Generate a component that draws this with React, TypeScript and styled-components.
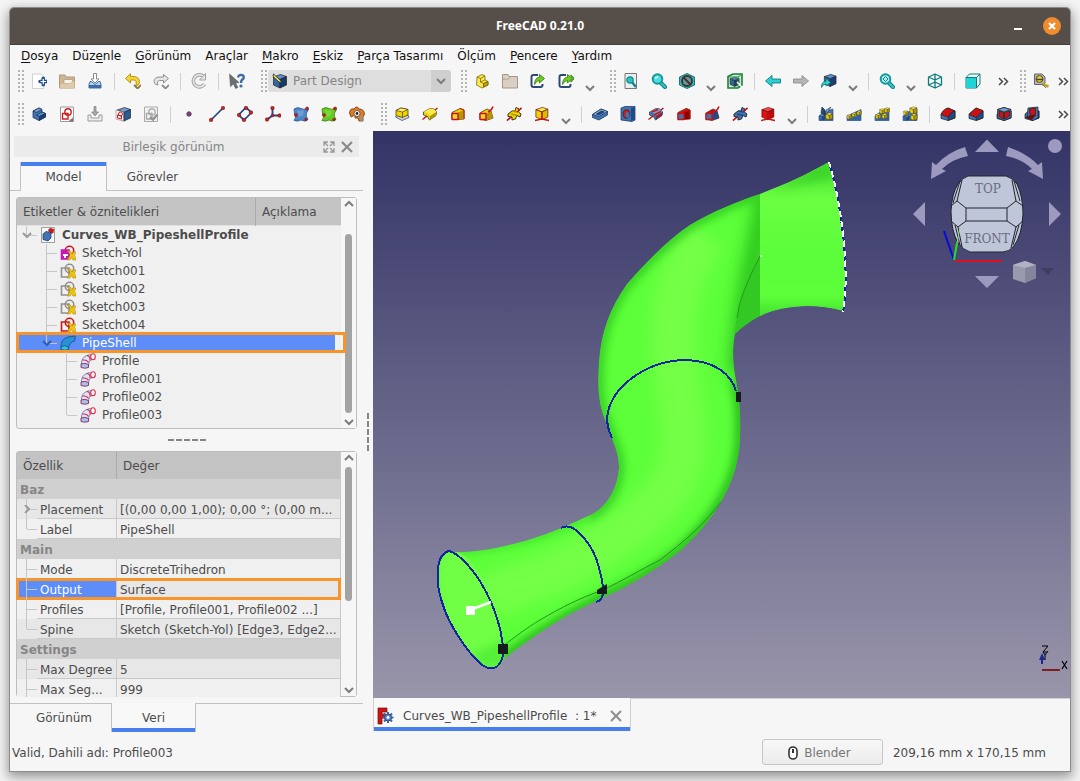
import React from "react";
import styled, { createGlobalStyle, css } from "styled-components";

const Global = createGlobalStyle`
  *, *::before, *::after { box-sizing: border-box; }
  body {
    margin: 0;
    background: #f4f4f4;
    color: #4c4c4c;
    font: 12px/18px "DejaVu Sans", sans-serif;
  }
  button, select { font: inherit; color: inherit; }
`;

/* ---------- window frame ---------- */

const Desktop = styled.div`
  display: flex;
  height: 100vh;
  min-height: 700px;
  padding: 8px 10px 10px;
`;

const Window = styled.div`
  flex: 1;
  min-width: 0;
  display: flex;
  flex-direction: column;
  background: #f6f6f6;
  border-radius: 4px 4px 0 0;
  box-shadow: 0 0 0 1px #8c8c8c, 0 4px 12px 2px rgba(0, 0, 0, 0.4);
  overflow: hidden;
`;

const TitleBar = styled.header`
  flex: none;
  height: 37px;
  display: grid;
  grid-template-columns: 1fr auto 1fr;
  align-items: center;
  background: #564f49;
  border-bottom: 1px solid #46403b;
`;

const Title = styled.h1`
  grid-column: 2;
  margin: 0;
  color: #fff;
  font: bold 12px/20px "Noto Sans", sans-serif;
`;

const WindowButtons = styled.div`
  justify-self: end;
  display: flex;
  align-items: center;
  gap: 16px;
  padding-right: 9px;
`;

const FrameButton = styled.button<{ $round?: boolean }>`
  width: 18px;
  height: 18px;
  padding: 0;
  border: 0;
  border-radius: 9px;
  background: ${(p) => (p.$round ? "#f18c2e" : "none")};
  svg { display: block; }
`;

const MenuBar = styled.nav`
  flex: none;
  display: flex;
  height: 20px;
  padding: 1px 4px 0;
  color: #111;
`;

const MenuItem = styled.button`
  padding: 0 7px;
  border: 0;
  background: none;
  line-height: 20px;
  white-space: nowrap;
  u { text-underline-offset: 2px; }
`;

/* ---------- tool bars ---------- */

const ToolRow = styled.div`
  flex: none;
  display: flex;
  align-items: center;
  gap: 2px;
  height: 33px;
  padding-bottom: 1px;
`;

const ToolGroup = styled.div<{ $grow?: boolean }>`
  display: flex;
  align-items: center;
  flex: ${(p) => (p.$grow ? "1 0 auto" : "none")};
`;

const Grip = styled.span`
  flex: none;
  width: 6px;
  height: 22px;
  margin: 0 1px 0 8px;
  background: radial-gradient(circle at 1px 1px, #b4b4b4 1px, transparent 1px) 0 0 / 4px 4px;
`;

const ToolButton = styled.button`
  flex: none;
  width: 28px;
  height: 28px;
  padding: 6px;
  border: 0;
  background: none;
  svg { display: block; width: 16px; height: 16px; }
`;

const MenuArrow = styled.button`
  flex: none;
  display: flex;
  align-items: flex-end;
  justify-content: center;
  width: 20px;
  height: 24px;
  padding: 0 0 1px;
  border: 0;
  background: none;
`;

const MoreButton = styled.button`
  flex: none;
  display: flex;
  align-items: center;
  justify-content: flex-end;
  width: 15px;
  height: 28px;
  margin-left: auto;
  padding: 0 1px 0 0;
  border: 0;
  background: none;
`;

const Divider = styled.span`
  flex: none;
  width: 10px;
  height: 17px;
  background: linear-gradient(#d0d0d0, #d0d0d0) center / 1px 100% no-repeat;
`;

const Combo = styled.div`
  display: flex;
  align-items: center;
  width: 183px;
  height: 22px;
  border-radius: 3px;
  background: linear-gradient(90deg, #dedede 163px, #cfcfcf 163px);
  > svg { flex: none; margin: 0 5px 0 4px; }
`;

const ComboSelect = styled.select`
  flex: 1;
  min-width: 0;
  height: 22px;
  padding: 0;
  border: 0;
  appearance: none;
  background: none;
  color: #858585;
  opacity: 1;
`;

/* ---------- main area ---------- */

const Main = styled.main`
  flex: 1;
  min-height: 0;
  display: grid;
  grid-template-columns: minmax(353px, 1fr) 10px minmax(0, 2fr);
`;

const Dock = styled.aside`
  display: flex;
  flex-direction: column;
  min-height: 0;
  padding-bottom: 1px;
`;

const DockTitle = styled.div`
  flex: none;
  display: flex;
  align-items: center;
  height: 21px;
  margin: 5px 4px;
  padding-right: 3px;
  background: #ebebeb;
  color: #858585;
  h2 {
    flex: 1;
    margin: 0;
    font: inherit;
    text-align: center;
    padding-left: 13px;
  }
`;

const DockButton = styled.button`
  width: 18px;
  height: 18px;
  padding: 2px;
  border: 0;
  background: none;
  svg { display: block; }
`;

const TabRow = styled.div<{ $bottom?: boolean }>`
  flex: none;
  display: flex;
  height: 29px;
  ${(p) => p.$bottom
    ? css`box-shadow: inset 0 1px #c2c2c2;`
    : css`padding-left: 10px; box-shadow: inset 0 -1px #c2c2c2;`}
`;

const DockTab = styled.button<{ $active?: boolean; $bottom?: boolean; $wide?: boolean }>`
  width: ${(p) => (p.$wide ? 101 : p.$bottom ? 85 : p.$active ? 87 : 91)}px;
  padding: 0;
  padding-left: ${(p) => (p.$wide ? 7 : 0)}px;
  border: 0 solid #c2c2c2;
  background: none;
  ${(p) => p.$active && css`
    border-width: 0 1px;
    background: ${p.$bottom
      ? "linear-gradient(0deg, #4780ee 4px, #f8f8f8 4px)"
      : "linear-gradient(#4780ee 4px, #f8f8f8 4px)"};
  `}
`;

const Box = styled.section<{ $grow?: boolean }>`
  display: flex;
  flex: ${(p) => (p.$grow ? "1 1 0" : "none")};
  min-height: 0;
  margin: 0 6px;
  border: 1px solid #bdbdbd;
  border-radius: 3px;
  background: #f0f0f0;
`;

const BoxContent = styled.div<{ $clip?: boolean }>`
  flex: 1;
  min-width: 0;
  ${(p) => p.$clip && css`overflow: clip; overflow-clip-margin: 1px;`}
`;

const ScrollBar = styled.div`
  flex: none;
  display: flex;
  flex-direction: column;
  align-items: center;
  width: 15px;
  padding: 2px 0;
  background: #f6f6f6;
`;

const Thumb = styled.div<{ $share: number; $gap: number }>`
  width: 7px;
  margin: ${(p) => p.$gap}px 0 auto;
  flex: 0 1 ${(p) => p.$share}%;
  border-radius: 4px;
  background: #a3a3a3;
`;

const TreeHeader = styled.div`
  display: grid;
  grid-template-columns: 1fr 86px;
  height: 28px;
  background: #c3c3c3;
  border-bottom: 1px solid #e2e2e2;
  line-height: 28px;
  span { padding-left: 6px; }
  span + span { border-left: 1px solid #aaa; }
`;

const TreeBody = styled.div`
  padding-bottom: 4px;
`;

const TreeRow = styled.div<{ $selected?: boolean; $root?: boolean }>`
  position: relative;
  display: flex;
  align-items: center;
  height: 18px;
  white-space: nowrap;
  font-weight: ${(p) => (p.$root ? "bold" : "normal")};
  > svg { flex: none; margin: 0 6px 0 3px; }
  ${(p) => p.$selected && css`
    margin-right: 6px;
    background: #5c8df9;
    color: #fff;
    &::after {
      content: "";
      position: absolute;
      inset: -2px -11px -1px -1px;
      border: 3px solid #f8952a;
    }
  `}
`;

const Guide = styled.span<{ $kind: "none" | "tee" | "end" | "open" | "closed" }>`
  flex: none;
  position: relative;
  display: flex;
  align-items: center;
  justify-content: center;
  width: 20px;
  align-self: stretch;
  ${(p) => p.$kind !== "none" && css`
    background:
      linear-gradient(#c6c6c6, #c6c6c6) 9px 0 / 1px ${p.$kind === "tee" || p.$kind === "closed" ? "100%" : "50%"} no-repeat,
      linear-gradient(#c6c6c6, #c6c6c6) 10px 50% / 10px 1px no-repeat;
  `}
`;

const HSplit = styled.div<{ $thin?: boolean }>`
  flex: none;
  display: grid;
  place-items: center;
  height: ${(p) => (p.$thin ? 6 : 22)}px;
`;

const VSplit = styled.div`
  display: grid;
  place-items: center;
`;

const Dashes = styled.span<{ $vertical?: boolean }>`
  ${(p) => p.$vertical
    ? css`width: 2px; height: 38px; background: repeating-linear-gradient(#858585 0 6px, transparent 6px 8px);`
    : css`width: 38px; height: 2px; background: repeating-linear-gradient(90deg, #858585 0 6px, transparent 6px 8px);`}
`;

const PropTable = styled.table`
  width: 100%;
  table-layout: fixed;
  border-collapse: separate;
  border-spacing: 0;
  border-right: 1px solid #c6c6c6;
  th, td { padding: 0; text-align: left; white-space: nowrap; overflow: hidden; }
  col:first-child { width: 99px; }
  thead th {
    height: 27px;
    padding: 1px 0 0 6px;
    background: #c3c3c3;
    font-weight: normal;
  }
  thead th + th { border-left: 1px solid #aaa; }
`;

const GroupRow = styled.tr`
  && th {
    height: 20px;
    padding: 2px 0 0 3px;
    background: #d0d0d0;
    color: #868686;
  }
`;

const PropRow = styled.tr<{ $alt?: boolean; $selected?: boolean }>`
  background: ${(p) => (p.$alt ? "#e7e7e7" : "#f0f0f0")};
  && th, && td { height: 20px; font-weight: normal; }
  && th { background: linear-gradient(#c9c9c9, #c9c9c9) 20px 100% / 100% 1px no-repeat; }
  && td {
    padding: 2px 0 0 3px;
    border-left: 1px solid #c9c9c9;
    background: linear-gradient(#c9c9c9, #c9c9c9) 0 100% / 100% 1px no-repeat;
  }
  ${(p) => p.$selected && css`
    outline: 3px solid #f8952a;
    outline-offset: -2px;
    && th { background: #5c8df9; color: #fff; }
  `}
`;

const PropName = styled.div`
  display: flex;
  gap: 3px;
  height: 20px;
  > span:last-child { padding-top: 2px; }
`;

/* ---------- 3D view ---------- */

const Workspace = styled.section`
  display: flex;
  flex-direction: column;
  min-height: 0;
`;

const View = styled.div`
  flex: 1;
  min-height: 0;
  position: relative;
  overflow: hidden;
  background: linear-gradient(#333366, #9996ab);
`;

const Scene = styled.svg`
  display: block;
  width: 100%;
  height: 100%;
`;

const NavOverlay = styled.svg`
  position: absolute;
  top: 0;
  right: 0;
`;

const AxisOverlay = styled.svg`
  position: absolute;
  right: 0;
  bottom: 20px;
`;

const DocTabs = styled.div`
  flex: none;
  display: flex;
  height: 35px;
  padding-bottom: 2px;
  box-shadow: inset 0 1px #d2d2d2;
`;

const DocTab = styled.div`
  display: flex;
  align-items: center;
  width: 258px;
  padding: 2px 5px 0 3px;
  border: 1px solid #cfcfcf;
  border-width: 0 1px 0;
  background: linear-gradient(0deg, #4780ee 4px, #f8f8f8 4px);
  white-space: pre;
  > svg { margin-right: 9px; }
  > button { margin-left: auto; }
`;

const StatusBar = styled.footer`
  flex: none;
  display: flex;
  align-items: center;
  height: 38px;
  padding: 0 24px 0 2px;
  > span { padding-top: 1px; }
`;

const NavStyle = styled.button`
  display: flex;
  align-items: center;
  justify-content: center;
  gap: 6px;
  width: 121px;
  height: 26px;
  margin: 0 10px 0 auto;
  padding: 1px 6px 0 0;
  border: 1px solid #c6c6c6;
  border-radius: 3px;
  background: linear-gradient(#f8f8f8, #ececec);
  color: #777;
`;

/* ---------- icons ---------- */

const BL = ["#729fcf", "#3f74b4", "#204a87"];
const YE = ["#fce94f", "#edd400", "#b89600"];
const RE = ["#ef4040", "#d01010", "#900000"];

type Shade = string[];

const Cube = ({ c, s = "#222", x = 0, y = 0, k = 1 }: { c: Shade; s?: string; x?: number; y?: number; k?: number }) => (
  <g transform={`translate(${x} ${y}) scale(${k})`} stroke={s} strokeWidth={0.7} strokeLinejoin="round">
    <path d="M1.500 4 8.500 1.500 14.500 3.500 8 6.500Z" fill={c[0]} />
    <path d="M1.500 4 8 6.500V15L1.500 12Z" fill={c[1]} />
    <path d="M8 6.500 14.500 3.500V12L8 15Z" fill={c[2]} />
  </g>
);

const Dot = ({ x, y, r = 1.8 }: { x: number; y: number; r?: number }) => (
  <circle cx={x} cy={y} r={r} fill="#cc2222" stroke="#6a1010" strokeWidth={0.5} />
);

const Lens = ({ mark }: { mark?: boolean }) => (
  <g fill="none">
    <path d="M9.500 9.500 14 14" stroke="#0f8284" strokeWidth={4} strokeLinecap="round" />
    <path d="M9.500 9.500 14 14" stroke="#2fc6c7" strokeWidth={2} strokeLinecap="round" />
    <circle cx={6.500} cy={6} r={4.800} fill={mark ? "#a9eaea" : "#4fdcdc"} stroke="#14989a" strokeWidth={2} />
    {mark ? <path d="M6.500 3.500 9 6 6.500 8.500 4 6Z" stroke="#0f8a8c" /> : <path d="M4 5.500 7 3.500" stroke="#e8ffff" strokeWidth={1.500} />}
  </g>
);

const Loft = ({ c, face, axis }: { c: Shade; face: string; axis?: boolean }) => (
  <g strokeLinejoin="round">
    <path d={axis ? "M2 7 9 3 13 5 15 12 8 14.500 2 13Z" : "M2 6.500 10 2.500 14 4V13L8 13.500 2 13Z"} fill={c[1]} stroke="#5a2a10" strokeWidth={0.8} />
    <path d={axis ? "M8 8 13 5 15 12 8 14Z" : "M8 6.500 14 4V13L8 13Z"} fill={c[2]} />
    <path d="M2 7.500H8V13.500H2Z" fill={face} stroke="#c11" strokeWidth={1.400} />
    {axis ? <path d="M10 6Q14 4 15 0.500" fill="none" stroke="#c11" strokeWidth={1.400} /> : <path d="M10 2.500 14 4V13" fill="none" stroke="#c11" />}
  </g>
);

const Revolve = ({ c }: { c: Shade }) => (
  <g>
    <path d="M0.500 13.500 15.500 2" stroke="#c11" strokeWidth={1.500} />
    <path d="M1.500 6 8 2.500Q12.500 2 14.500 6L14 9.500 7.500 14Q6.500 9.500 1.500 9Z" fill={c[1]} stroke="#333" strokeWidth={0.8} />
    <path d="M1.500 6 8 2.500Q12.500 2 14.500 6L8 10Q6 6 1.500 6Z" fill={c[0]} />
    <path d="M8 10 14.500 6 14 9.500 7.500 14Z" fill={c[2]} />
  </g>
);

const Helix = ({ c }: { c: Shade }) => (
  <g strokeLinejoin="round">
    <path d="M1 14.500 15.500 2" stroke="#c11" strokeWidth={1.400} />
    <path d="M2 8 6 5 9 5 10 1.500 13 3 12.500 6 15 8 14 11 11 9.500 9.500 13 6 14 6 11 2 10.500Z" fill={c[1]} stroke="#222" strokeWidth={0.9} />
    <path d="M6 5 12.500 6M5 8 11 9.500" stroke={c[2]} strokeWidth={1.400} />
    <path d="M1 14.500 5 11M11 6 15.500 2" stroke="#c11" strokeWidth={1.400} />
  </g>
);

const Primitive = ({ c }: { c: Shade }) => (
  <g>
    <Cube c={c} s="#600" k={0.920} x={0.5} y={0} />
    <path d="M8 6V13L1 14.500M8 13 15 14.500" fill="none" stroke="#c11" strokeWidth={1.300} />
  </g>
);

const Pattern = ({ n }: { n: number }) => (
  <g>
    <path d={n === 1 ? "M1 10 15 3.500V14.500H1Z" : "M1 10 6 6 15 3V14.500H1Z"} fill={BL[1]} stroke="#204a87" strokeWidth={0.6} />
    <path d="M1 14.500 15 8V14.500Z" fill={BL[2]} opacity={0.4} />
    {n === 0 && <><path d="M4 1 7 4V9L3 7Z" fill={BL[2]} stroke="#222" strokeWidth={0.6} /><path d="M13 1 8 4 8 9Z" fill={BL[0]} stroke="#222" strokeWidth={0.5} /><Cube c={BL} x={1} y={8} k={0.4} /><Cube c={YE} x={7} y={6} k={0.530} /></>}
    {n === 1 && <><Cube c={YE} x={0.5} y={8} k={0.350} /><Cube c={YE} x={5.500} y={6} k={0.350} /><Cube c={YE} x={10.500} y={4} k={0.350} /></>}
    {n === 2 && <><Cube c={YE} x={1} y={7} k={0.4} /><Cube c={YE} x={5} y={2} k={0.4} /><Cube c={YE} x={10} y={1} k={0.4} /><Cube c={YE} x={7.500} y={7} k={0.4} /></>}
    {n === 3 && <><Cube c={YE} x={7} y={0} k={0.550} /><Cube c={YE} x={8} y={7} k={0.5} /><Cube c={YE} x={1} y={4} k={0.350} /><Cube c={BL} x={2} y={9} k={0.350} /></>}
  </g>
);

const Dress = ({ n }: { n: number }) => (
  <g strokeLinejoin="round" strokeWidth={0.7} stroke="#222">
    <path d="M1 8 8 2 15 5V12L8 14.500 1 12.500Z" fill={BL[1]} />
    <path d="M9 8 15 5V12L8 14.500Z" fill={BL[2]} />
    {n === 0 && <path d="M1 8.500Q3 3 8 2L15 5Q10 6 8.500 11.500Z" fill={RE[1]} />}
    {n === 1 && <path d="M1 8.500 8 2 15 4.500 8 11.500Z" fill={RE[1]} />}
    {n === 2 && <><path d="M1.500 3.500 8 1.500 15 3.500V11.500L8 14.500 1.500 12Z" fill={BL[1]} /><path d="M1.500 3.500 8 1.500 15 3.500 8 6Z" fill={BL[0]} /><path d="M3 5 7.500 6.500V13L3 10.500Z" fill={RE[1]} /><path d="M8.500 6.500 13.500 5V10L8.500 13Z" fill={RE[1]} /></>}
    {n === 3 && <><path d="M4 2 14 1V12L9 14.500 3 12Z" fill={BL[1]} /><path d="M5.500 3 11.500 2V9L6 10Z" fill={RE[1]} /><path d="M1.500 11.500 6 10 11.500 9 8 13.500Z" fill={RE[2]} /></>}
  </g>
);

const LinkArrow = ({ two }: { two?: boolean }) => (
  <g>
    <path d="M8 2H3.500Q1.500 2 1.500 4V12Q1.500 14 3.500 14H10.500Q12.500 14 12.500 12V11" fill="#fff" stroke="#2a4a72" strokeWidth={2} />
    <path d="M4.500 11.500Q4.500 5 9.500 4V1.500L14.500 5.500 9.500 10V7.500Q6.500 7.500 4.500 11.500Z" fill="#6ccb26" stroke="#2f7306" strokeWidth={0.8} />
    {two && <path d="M12.500 2 16 5.500 12.500 9" fill="none" stroke="#3f9210" strokeWidth={1.300} />}
  </g>
);

const ICONS: Record<string, React.ReactNode> = {
  new: <><path d="M1.500 1H10L13 4V15.500H1.500Z" fill="#fff" stroke="#d2d2d2" /><path d="M9 8.500H15.500M12.250 5.250V11.750" stroke="#24508c" strokeWidth={3.600} strokeLinecap="round" /><path d="M9.500 8.500H15M12.250 5.750V11.250" stroke="#fff" strokeWidth={1.200} /></>,
  open: <><path d="M0.500 2H6L7 4H15.500V15H0.500Z" fill="#cdb691" stroke="#b09a78" /><path d="M5 6.500H13.500V10.500H5Z" fill="#f8f4ec" stroke="#a08b68" strokeWidth={0.6} /><path d="M1 14.500V11.500Q2 10 6 10.500H10L12.500 8.500H15.500V15H1Z" fill="#dccaa9" /></>,
  save: <><path d="M6.500 0.500H9.500V6H12L8 10 4 6H6.500Z" fill="#fff" stroke="#8a8a8a" /><path d="M3 8.500 2 11.500V15H14V11.500L13 8.500H11.500L8 11.500 4.500 8.500Z" fill="#b9cfe8" stroke="#3c6aa5" /><path d="M2 12H14V15H2Z" fill="#3c6aa5" /></>,
  undo: <><path d="M0.500 5.500 5.500 0.800V3.500H9Q14.500 4 14.500 9.500 13.500 13 11 12.500 12 7 9 7H5.500V10Z" fill="#f5d53a" stroke="#b48a00" strokeWidth={0.9} /><path d="M9 12 12.500 15.500 16 12" fill="none" stroke="#8c7a40" strokeWidth={1.800} /></>,
  redo: <><path d="M15.500 5.500 10.500 1.500V4H6Q1 4.500 1 8.500 1.500 12 5 12 3.500 8 6.500 7.500H10.500V10Z" fill="#e4e4e4" stroke="#909090" /><path d="M9 12 12.500 15.500 16 12" fill="none" stroke="#8c8c8c" strokeWidth={1.800} /></>,
  refresh: <g fill="none"><path d="M12.500 3.500A6 6 0 1 0 13.500 11" stroke="#a2a2a2" strokeWidth={3.600} /><path d="M12.500 3.500A6 6 0 1 0 13.500 11" stroke="#e8e8e8" strokeWidth={1.600} /><path d="M14.500 0.500V7H8.500Z" fill="#e8e8e8" stroke="#a2a2a2" /></g>,
  help: <><path d="M0.500 1 10 9.500 6.500 10 9 14.500 6.500 15.500 4.500 11 1.500 13.500Z" fill="#6b7072" stroke="#4a4e50" strokeWidth={0.5} /><path d="M9 4.500Q9.500 1.500 12.500 2 15.500 2.500 14.500 5.500 12 7 12 10" fill="none" stroke="#3f6ea6" strokeWidth={2.400} /><circle cx={12} cy={13} r={1.600} fill="#3f6ea6" /></>,
  partYellow: <g stroke="#6b5a00" strokeWidth={0.7} strokeLinejoin="round"><path d="M3 4 8 1.500 11 3V7L14 8.500V12L8 15 2.500 12Z" fill="#fce94f" /><path d="M3 4 6.500 5.500V9L9.500 10.500 14 8.500M6.500 5.500 11 3M6.500 9 11 7M9.500 10.500V14" fill="none" /><path d="M9.500 10.500 14 8.500V12L9.500 14Z" fill="#c4a000" /></g>,
  folder: <path d="M0.500 1.500H6L7 3.500H15.500V15H0.500ZM0.500 6H6.500L7.500 4" fill="#dacfc3" stroke="#a39686" />,
  link1: <LinkArrow />,
  link2: <LinkArrow two />,
  fitPage: <><path d="M2 0.500H13.500V15.500H2Z" fill="#e9efef" stroke="#777" /><path d="M8 8 13 14" stroke="#0f8a8c" strokeWidth={2.500} /><circle cx={7} cy={7} r={3.200} fill="#2cc2c3" stroke="#0f8a8c" strokeWidth={1.200} /></>,
  zoom: <Lens />,
  noDraw: <><path d="M8 0.500 15.500 4V12L8 15.500 0.500 12V4Z" fill="#35b4b6" stroke="#17797b" /><circle cx={8} cy={8} r={5} fill="#5a9ea0" stroke="#4a2a2a" strokeWidth={1.800} /><path d="M4.500 4.500 11.500 11.500" stroke="#4a2a2a" strokeWidth={1.800} /></>,
  bbox: <><path d="M1 3.500 6 1H15V12L11 15H1Z" fill="#cfe8cf" stroke="#17803a" strokeWidth={1.600} /><Cube c={["#4d86b8", "#2e648f", "#1d3f66"]} x={2} y={3} k={0.7} /><path d="M1 4H11V15M11 4 15 1" fill="none" stroke="#2a9a4a" /><path d="M10 9 15 14" stroke="#fff" strokeWidth={1.500} /></>,
  back: <path d="M0.500 8 7 2.500V6H15.500V10H7V13.500Z" fill="#2ccfd0" stroke="#0f7f81" strokeWidth={0.9} />,
  forward: <path d="M15.500 8 9 2.500V6H0.500V10H9V13.500Z" fill="#b5b5b5" stroke="#8f8f8f" strokeWidth={0.9} />,
  linkBack: <><Cube c={["#5a8fd0", "#2f66a8", "#1b3f74"]} x={2} y={0} k={0.9} /><path d="M0.500 14.500Q0 9 5 8V5.500L10 9.500 5 13V11Q2 11 0.500 14.500Z" fill="#2ccfd0" stroke="#0b5f61" strokeWidth={0.7} /></>,
  zoomSel: <Lens mark />,
  iso: <path d="M8 1 14.500 4V12L8 15 1.500 12V4ZM1.500 4 8 7 14.500 4M8 7V15M8 1V7M1.500 12 8 9 14.500 12" fill="#effafa" stroke="#12797b" strokeWidth={1.300} strokeLinejoin="round" />,
  front: <><path d="M1 4.500 4.500 1H15V11L11.500 15H1Z" fill="#eafafa" stroke="#117a7c" strokeLinejoin="round" /><path d="M1 4.500H11.500V15H1Z" fill="#22d3d5" /><path d="M1 4.500H11.500V15M11.500 4.500 15 1" fill="none" stroke="#117a7c" /></>,
  measure: <><path d="M1.500 1H9L12 4V10L9 11.500H1.500Z" fill="#b5b5b5" stroke="#666" /><circle cx={6.500} cy={6} r={3.400} fill="#e8d22a" stroke="#4d4d26" /><path d="M3 6.500H10" stroke="#444" strokeWidth={1.500} /><path d="M9 11 15.500 13.500" stroke="#b7a51e" strokeWidth={2.500} /><path d="M9 11 13 15" stroke="#777" /></>,

  body: <g stroke="#152d52" strokeWidth={0.7} strokeLinejoin="round"><path d="M2 5 8 2 11 3.500V6L14.500 7.500V11L8 14.500 2 11.500Z" fill="#3f74b4" /><path d="M2 5 8 2 11 3.500 5.500 6.500Z" fill="#729fcf" /><path d="M5.500 9 11 6 14.500 7.500 8.500 10.500Z" fill="#5b8ecb" /><path d="M8.500 10.500 14.500 7.500V11L8 14.500Z" fill="#1c3f74" /></g>,
  sketch: <><path d="M1.500 1H14.500V15.500H1.500Z" fill="#fff" stroke="#9a9a9a" /><path d="M3.500 7.500H9V13H3.500Z" fill="none" stroke="#d21c1c" strokeWidth={1.400} /><circle cx={9} cy={6} r={3.200} fill="none" stroke="#d21c1c" strokeWidth={1.400} /><path d="M11 13.500Q14 13 14 10V15.500H10Z" fill="#777" /></>,
  attach: <><path d="M7 0.500H9V6H11.500L8 10 4.500 6H7Z" fill="#a8a8a8" stroke="#808080" strokeWidth={0.7} /><path d="M1 9H4V12H12V9H15V15H1Z" fill="#eee" stroke="#999" /></>,
  validate: <><Cube c={["#6f9fd4", "#2f66a8", "#2a5b98"]} x={1} /><path d="M1 4 8.500 6V15L1 13Z" fill="#eef2f7" stroke="#888" strokeWidth={0.6} /><circle cx={5.500} cy={8} r={2} fill="none" stroke="#d21c1c" /><path d="M2.500 9 6.500 10V13L2.500 12Z" fill="none" stroke="#d21c1c" /></>,
  mapSketch: <><path d="M1.500 1H14.500V15.500H1.500Z" fill="#f2f2f2" stroke="#ababab" /><path d="M3.500 7.500H9V13H3.500Z" fill="none" stroke="#a8a8a8" strokeWidth={1.300} /><circle cx={9} cy={6} r={3.200} fill="none" stroke="#a8a8a8" strokeWidth={1.300} /><path d="M7 11 10 13.500 14.500 8.500" fill="none" stroke="#939393" strokeWidth={2.400} /></>,
  point: <circle cx={8} cy={8} r={2.200} fill="#b03050" stroke="#2f4f86" />,
  line: <><path d="M2 14 14 2" stroke="#234a86" strokeWidth={1.700} /><Dot x={2} y={14} /><Dot x={14} y={2} /></>,
  plane: <><path d="M9 1.500 14.500 6.500 7 14 1.500 9Z" fill="none" stroke="#234a86" strokeWidth={1.700} /><Dot x={9} y={2} /><Dot x={14} y={6.500} /><Dot x={7} y={14} /><Dot x={2} y={9} /></>,
  axes: <><path d="M7.500 9.500V1.500M7.500 9.500 15 9.500M7.500 9.500 1.500 14" stroke="#234a86" strokeWidth={1.900} /><Dot x={7.500} y={2} /><Dot x={14.500} y={9.500} /><Dot x={2} y={13.500} /><Dot x={7.500} y={9.500} r={1.400} /></>,
  shapeBinder: <><path d="M1 3Q5 0.500 8 2.500T15 1.500Q16.500 3 13.500 7 12.500 10 15 13.500 12 16.500 8 14 5 16 1 14.500 4 11 1.500 8Z" fill="#4f86c6" stroke="#24508c" strokeWidth={0.7} /><path d="M4 4 8 5 11 4 10 9 6 11Z" fill="#6f9dd4" /><Dot x={14} y={2.500} r={1.500} /><Dot x={3} y={9} r={1.500} /><Dot x={13} y={13.500} r={1.300} /></>,
  subBinder: <><path d="M1 3Q5 0.500 8 2.500T15 1.500Q16.500 3 13.500 7 12.500 10 15 13.500 12 16.500 8 14 5 16 1 14.500 4 11 1.500 8Z" fill="#68c924" stroke="#2f7306" strokeWidth={0.7} /><path d="M4 4 8 5 11 4 10 9 6 11Z" fill="#7fd63a" /><Dot x={14} y={2.500} r={1.500} /><Dot x={3} y={9} r={1.500} /><Dot x={13} y={13.500} r={1.300} /></>,
  clone: <><path d="M0.500 7Q1 2 5 3L7 1Q9 0.500 10 3 15 3 15.500 8L14 11V15H10L9 12H6V9L2 11Z" fill="#e07b22" stroke="#6b3408" strokeWidth={0.8} /><circle cx={8} cy={7.500} r={3} fill="#fff" stroke="#333" strokeWidth={0.7} /><circle cx={8} cy={7.500} r={1.400} fill="#222" /><path d="M12.500 10V15" stroke="#999" strokeWidth={2} /></>,
  pad: <><path d="M1.500 11 8 14.500 15 11.500 14 9H3Z" fill="#ccd3d8" stroke="#61717d" /><path d="M2 4.500 7 2 14 3.500V9L8.500 11.500 2 9.500Z" fill="#edd400" stroke="#4e4200" strokeWidth={0.8} /><path d="M2 4.500 7 2 14 3.500 8.500 6Z" fill="#fdf07a" stroke="#4e4200" strokeWidth={0.7} /><path d="M8.500 6V11.500" stroke="#4e4200" strokeWidth={0.7} /></>,
  revolution: <Revolve c={YE} />,
  addLoft: <Loft c={YE} face="#f5d53a" />,
  addPipe: <Loft c={YE} face="#f5d53a" axis />,
  addHelix: <Helix c={YE} />,
  addPrim: <Primitive c={["#fce94f", "#edd400", "#d9bd00"]} />,
  pocket: <g stroke="#152d52" strokeWidth={0.7} strokeLinejoin="round"><path d="M0.500 8.500 9 3 15.500 5.500V9L7 14 0.500 11.500Z" fill="#3f74b4" /><path d="M0.500 8.500 9 3 15.500 5.500 7 10.500Z" fill="#82aede" /><path d="M4.500 8 9.500 5 12 6 7 9Z" fill="#204a87" /></g>,
  hole: <g><path d="M1 2 5 0.500H15V14L12 15.500 1 14Z" fill="#3f74b4" stroke="#152d52" strokeWidth={0.7} /><path d="M11 2V15L15 13V1Z" fill="#204a87" /><ellipse cx={6.500} cy={8} rx={3.300} ry={4.300} fill="#d21c1c" stroke="#222" strokeWidth={0.7} /><ellipse cx={7.500} cy={9} rx={2} ry={3} fill="#3f74b4" /></g>,
  groove: <><Revolve c={BL} /><path d="M3.500 6 10 3.500M6 9 13 5.500M8 11.500 14 8" stroke="#c11" strokeWidth={1.600} /></>,
  subLoft: <Loft c={["#e33", "#d01010", "#900000"]} face="#3f74b4" />,
  subPipe: <Loft c={["#e33", "#c01020", "#204a87"]} face="#3f74b4" axis />,
  subHelix: <Helix c={BL} />,
  subPrim: <Primitive c={["#f04848", "#dd1414", "#c00808"]} />,
  mirrored: <Pattern n={0} />,
  linear: <Pattern n={1} />,
  polar: <Pattern n={2} />,
  multi: <Pattern n={3} />,
  fillet: <Dress n={0} />,
  chamfer: <Dress n={1} />,
  draft: <Dress n={2} />,
  thickness: <Dress n={3} />,

  workbench: <><Cube c={["#5d8fcb", "#2f66a8", "#17386a"]} /><path d="M1.500 1 8 7 10 9.500 7 9 1 3.500Z" fill="#fce94f" stroke="#333" strokeWidth={0.9} /></>,
  document: <><path d="M1.500 0.500H14.500V15.500H1.500Z" fill="#f8f8f8" stroke="#888" strokeWidth={0.8} /><path d="M8 3 10 1 14 2 13.500 6 10 7Z" fill="#c11c1c" /><path d="M3 7 6 4.500 11 5.500V11L8 14 3 12.500Z" fill="#3f74b4" stroke="#1a3460" strokeWidth={0.7} /></>,
  shell: <><path d="M1 14Q0 4 8 2L15 1Q16 3 14.500 6 9 7 8.500 14Z" fill="#2b8fd6" stroke="#174a86" strokeWidth={0.8} /><path d="M1 12Q4 9.500 8.500 12L8.500 14.500Q5 16 1 14.500Z" fill="#36c2d6" stroke="#174a86" strokeWidth={0.8} /></>,
  profile: <><path d="M1.500 13Q0.500 4 8 2L13 1.500 14.500 6 12 6.500Q8.500 7.500 8.500 13Z" fill="#dfe3f6" stroke="#5a6aa8" strokeWidth={0.8} /><ellipse cx={13} cy={3.800} rx={2.300} ry={3} fill="#fff" stroke="#e02848" strokeWidth={1.100} /><path d="M7 2.500Q10.500 3 10 7.500M2.500 7Q7 6.500 8.500 9.500" fill="none" stroke="#e02848" strokeWidth={1.100} /><path d="M1 11Q5 9.500 8.500 11.500V14.500Q5 16 1 14.500Z" fill="#a9bfe6" stroke="#8a2a60" strokeWidth={0.9} /></>,
};

const sketchIcon = (color: string, pink?: boolean) => (
  <>
    <circle cx={9.500} cy={5.500} r={4.200} fill="none" stroke={color} strokeWidth={1.600} />
    <path d="M1.500 5H9V14H1.500Z" fill={pink ? "#c814b8" : "none"} stroke={pink ? "#c814b8" : color} strokeWidth={1.600} />
    {pink && <path d="M3 9H8V11H6V13H4V11H3Z" fill="#fff" />}
    <path d="M7 6Q11 8 9.500 11T7 15H10L11.500 12.500 13 15H16V13Q13 11 16 7H13L12 9 10.500 6Z" fill="#f1c40c" stroke="#a37e00" strokeWidth={0.5} />
  </>
);
ICONS.sketchPink = sketchIcon("#cc1818", true);
ICONS.sketchGray = sketchIcon("#909090");
ICONS.sketchRed = sketchIcon("#cc1818");

const Icon = ({ name }: { name: string }) => (
  <svg width="16" height="16" viewBox="0 0 16 16" aria-hidden="true">{ICONS[name]}</svg>
);

const Chevron = ({ dir = "down", color = "#7c7c7c" }: { dir?: "down" | "up" | "right"; color?: string }) => {
  const d = { down: "M1 2 5 6 9 2", up: "M1 6 5 2 9 6", right: "M3 0 7 4 3 8" }[dir];
  return <svg width="10" height="8" viewBox="0 0 10 8" aria-hidden="true"><path d={d} fill="none" stroke={color} strokeWidth="2" /></svg>;
};

const More = () => (
  <svg width="11" height="9" viewBox="0 0 11 9" aria-hidden="true">
    <path d="M1 1 4.500 4.500 1 8M6 1 9.500 4.500 6 8" fill="none" stroke="#4a4a4a" strokeWidth="1.500" />
  </svg>
);

const Cross = ({ color = "#8a8a8a" }: { color?: string }) => (
  <svg width="14" height="14" viewBox="0 0 14 14" aria-hidden="true">
    <path d="M2 2 12 12M12 2 2 12" stroke={color} strokeWidth="2.200" />
  </svg>
);

/* ---------- data ---------- */

// "|" is a divider and "v" a drop-down arrow; anything else names an icon.
const FILE_TOOLS = "new open save | undo redo | refresh | help";
const LINK_TOOLS = "partYellow folder link1 link2 v";
const VIEW_TOOLS = "fitPage zoom noDraw v bbox | back forward linkBack v | zoomSel v iso | front";
const HELPER_TOOLS = "body sketch attach validate mapSketch | point line plane axes shapeBinder subBinder clone";
const MODEL_TOOLS =
  "pad revolution addLoft addPipe addHelix addPrim v | pocket hole groove subLoft subPipe subHelix subPrim v | mirrored linear polar multi | fillet chamfer draft thickness";

const MENUS: [string, string, string][] = [
  ["", "D", "osya"], ["Düz", "e", "nle"], ["", "G", "örünüm"], ["Araçlar", "", ""], ["", "M", "akro"],
  ["", "E", "skiz"], ["", "P", "arça Tasarımı"], ["Ölçüm", "", ""], ["", "P", "encere"], ["", "Y", "ardım"],
];

type Kind = "none" | "tee" | "end" | "open" | "closed";
const TREE: { label: string; icon: string; guides: Kind[]; selected?: boolean }[] = [
  { label: "Curves_WB_PipeshellProfile", icon: "document", guides: ["open"] },
  { label: "Sketch-Yol", icon: "sketchPink", guides: ["none", "tee"] },
  { label: "Sketch001", icon: "sketchGray", guides: ["none", "tee"] },
  { label: "Sketch002", icon: "sketchGray", guides: ["none", "tee"] },
  { label: "Sketch003", icon: "sketchGray", guides: ["none", "tee"] },
  { label: "Sketch004", icon: "sketchRed", guides: ["none", "tee"] },
  { label: "PipeShell", icon: "shell", guides: ["none", "open"], selected: true },
  { label: "Profile", icon: "profile", guides: ["none", "none", "tee"] },
  { label: "Profile001", icon: "profile", guides: ["none", "none", "tee"] },
  { label: "Profile002", icon: "profile", guides: ["none", "none", "tee"] },
  { label: "Profile003", icon: "profile", guides: ["none", "none", "end"] },
];

type Prop = { name: string; value: string; kind: Kind; alt?: boolean; selected?: boolean };
const PROPS: { group: string; rows: Prop[] }[] = [
  { group: "Baz", rows: [
    { name: "Placement", value: "[(0,00 0,00 1,00); 0,00 °; (0,00 m...", kind: "closed", alt: true },
    { name: "Label", value: "PipeShell", kind: "end" },
  ] },
  { group: "Main", rows: [
    { name: "Mode", value: "DiscreteTrihedron", kind: "tee" },
    { name: "Output", value: "Surface", kind: "tee", alt: true, selected: true },
    { name: "Profiles", value: "[Profile, Profile001, Profile002 ...]", kind: "tee" },
    { name: "Spine", value: "Sketch (Sketch-Yol) [Edge3, Edge2...", kind: "end", alt: true },
  ] },
  { group: "Settings", rows: [
    { name: "Max Degree", value: "5", kind: "tee", alt: true },
    { name: "Max Seg...", value: "999", kind: "tee" },
  ] },
];

const Tools = ({ list }: { list: string }) => (
  <>
    {list.split(" ").map((t, i) =>
      t === "|" ? <Divider key={i} />
        : t === "v" ? <MenuArrow key={i} aria-label="More options"><Chevron /></MenuArrow>
        : <ToolButton key={i} aria-label={t}><Icon name={t} /></ToolButton>
    )}
  </>
);

const GuideCell = ({ kind, light }: { kind: Kind; light?: boolean }) => (
  <Guide $kind={kind}>
    {kind === "open" && <Chevron color={light ? "#2f5db0" : "#9a9a9a"} />}
    {kind === "closed" && <Chevron dir="right" color="#9a9a9a" />}
  </Guide>
);

/* ---------- model drawing ---------- */

const PIPE =
  "M829 162C806 175 786 184 760 194C735 202 712 212 690 225C668 240 648 260 627 284C610 308 601 332 599 362C597 392 599 406 607 425C612 440 619 452 619 468C617 492 604 510 588 516L568 525C550 533 530 540 513 544C492 549 470 553 449 552C436 556 436 580 441 598C446 616 456 634 465 645C474 657 483 668 491 669C498 669 502 664 503 660C520 646 545 628 570 614C582 608 590 604 598 600C625 588 652 573 680 551C712 522 738 485 740 440C741 420 740 400 736 380C733 365 732 350 735 334C744 325 752 320 760 316C780 306 812 302 844 311C848 280 843 205 829 162Z";

const Model = () => (
  <Scene viewBox="373 131 697 567" role="img" aria-label="PipeShell">
    <defs>
      <clipPath id="pipe"><path d={PIPE} /></clipPath>
      <clipPath id="leftPart"><path d="M373 131H760V698H373Z" /></clipPath>
      <linearGradient id="flare" x1="0" y1="0" x2="0" y2="1">
        <stop offset="0" stopColor="#45dd2e" />
        <stop offset="0.250" stopColor="#6bff42" />
        <stop offset="0.600" stopColor="#5cfd3b" />
        <stop offset="0.850" stopColor="#5cff3a" />
        <stop offset="1" stopColor="#3fda2b" />
      </linearGradient>
      <filter id="soft" filterUnits="userSpaceOnUse" x="373" y="131" width="697" height="567"><feGaussianBlur stdDeviation="8" /></filter>
      <filter id="softer" filterUnits="userSpaceOnUse" x="373" y="131" width="697" height="567"><feGaussianBlur stdDeviation="4" /></filter>
    </defs>
    <g clipPath="url(#pipe)">
      <path d={PIPE} fill="#5cff3a" />
      <g clipPath="url(#leftPart)" fill="none">
        <path d="M705 235C665 290 672 340 680 400S695 500 560 570L480 600" stroke="#74ff46" strokeWidth="44" filter="url(#soft)" />
        <path d="M760 194C735 202 712 212 690 225C668 240 648 260 627 284C610 308 601 332 599 362C597 392 599 406 607 425C612 440 619 452 619 468C617 492 604 510 588 516" stroke="#35cd22" strokeWidth="10" filter="url(#softer)" />
        <path d="M588 516C550 533 520 545 449 552" stroke="#3edb2a" strokeWidth="6" filter="url(#softer)" />
        <path d="M503 660C520 646 545 628 598 600C625 588 652 573 680 551C712 522 738 485 740 440C741 420 740 400 736 380" stroke="#2bbd1c" strokeWidth="11" filter="url(#softer)" />
        <path d="M766 190C762 235 744 280 738 375" stroke="#2cc41d" strokeWidth="20" filter="url(#soft)" />
        <path d="M760 256Q738 298 734 336L760 316Z" fill="#33c823" />
        <path d="M760 256Q739 296 737 318" stroke="#229a1a" strokeWidth="1" />
      </g>
      <path d="M760 160H850V320H760Z" fill="url(#flare)" />
      <path d="M775 190 829 160 836 178C810 182 790 186 775 190Z" fill="#3ed42a" filter="url(#softer)" />
      <ellipse cx="471" cy="610" rx="24" ry="62" transform="rotate(-20 471 610)" fill="#70ff45" />
      <path d="M470 655 503 640V668H485Z" fill="#4ce835" opacity="0.700" filter="url(#softer)" />
    </g>
    <path d="M503 646C515 637 525 629 540 620C562 607 580 598 603 590C622 581 640 570 660 560C685 541 705 523 721 502" fill="none" stroke="#1e981c" strokeWidth="1" />
    <g fill="none" stroke="#1424a0" strokeWidth="2" shapeRendering="crispEdges">
      <path d="M449 551C433 555 437 588 442 602C449 627 470 655 482 665C489 670 500 671 503 655C504 625 486 583 465 562C459 556 454 552 449 551Z" />
      <path d="M561 528C574 520 594 546 599 568C604 586 606 600 596 602" />
      <path d="M612 438C607 428 606 417 609 408C617 383 650 360 686 360C715 361 731 374 736 391" />
    </g>
    <g fill="none" strokeWidth="2" shapeRendering="crispEdges">
      <path d="M829 162C842 205 850 275 843 312" stroke="#1424a0" />
      <path d="M829 162C842 205 850 275 843 312" stroke="#fff" strokeDasharray="6 4" />
    </g>
    <circle cx="761" cy="256" r="1" fill="#fff" />
    <path d="M470 610 491 602" stroke="#fff" strokeWidth="2.500" />
    <path d="M466 606H475V615H466Z" fill="#fff" />
    <path d="M498 644H508V654H498ZM597 590 607 584V594H597ZM736 392H741V402H736Z" fill="#161b1c" />
  </Scene>
);

const NavCube = () => (
  <NavOverlay width="170" height="170" viewBox="900 131 170 170" role="img" aria-label="Navigation cube">
    <g fill="#9c9abf">
      <path d="M987 139.500 999 152H975ZM987 288 999 276H975ZM913 214 925 202V226ZM1061 214 1049 202V226Z" />
      <path d="M965 147Q948 152 936 165L932 162 931 179 946 171 942 169Q952 159 968 156Z" />
      <path d="M1008 147Q1026 153 1038 165L1042 162 1043 179 1028 171 1032 169Q1022 159 1006 156Z" />
      <circle cx="1055" cy="146" r="7" />
    </g>
    <g stroke="#22242c" strokeWidth="1" strokeLinejoin="round">
      <path d="M968 176H1006Q1013 178 1017 184 1023 197 1023 214 1022 235 1014 246 1009 252 1003 252H970Q963 250 958 243 951 230 951 211 952 193 958 184 962 178 968 176Z" fill="#bfc6da" />
      <path d="M962 180 957 201 966 208H1007L1016 201 1012 180M957 201 951 206M966 208V221M1007 208V221M966 221H1007M966 221 958 227 962 247M1007 221 1016 227 1011 248M958 227 951 221M1016 227 1023 221M1016 201 1023 206M960 181 953 203M1014 181 1020 201M955 225 960 245M1019 225 1013 245" fill="none" />
    </g>
    <g fill="#676c7e" fontFamily="DejaVu Serif, serif" fontSize="12" textAnchor="middle">
      <text x="988" y="193">TOP</text>
      <text x="987" y="243">FRONT</text>
    </g>
    <path d="M954 260 944 231" stroke="#0808e0" strokeWidth="2" />
    <path d="M954 260 957 243" fill="none" stroke="#20e020" strokeWidth="2" />
    <path d="M957 243 960 228" fill="none" stroke="#8ce09a" />
    <path d="M955 261H1002" stroke="#e01020" strokeWidth="2" />
    <path d="M1013 265 1025 261 1036 265V278L1025 283 1013 279Z" fill="#9a9aae" />
    <path d="M1013 265 1025 268 1036 265 1025 261Z" fill="#b2b2c2" />
    <path d="M1025 268 1036 265V278L1025 283Z" fill="#84849c" />
    <path d="M1041 268H1054L1048 275Z" fill="#3e3d62" />
  </NavOverlay>
);

const AxisCross = () => (
  <AxisOverlay width="36" height="38" viewBox="1034 640 36 38" role="img" aria-label="Axes">
    <path d="M1042 670H1060" stroke="#7c2020" strokeWidth="2" />
    <path d="M1042 664V656" stroke="#1c2a90" strokeWidth="2" />
    <path d="M1042 653 1045 660H1039Z" fill="#1c2a90" />
    <path d="M1042 646H1048L1043 652H1047M1043 652 1045 655 1048 651M1045 655V660" fill="none" stroke="#000" />
    <path d="M1062 661 1067 669M1067 661 1062 669" stroke="#000" strokeWidth="1.200" />
  </AxisOverlay>
);

export default function App() {
  return (
    <>
      <Global />
      <Desktop>
        <Window>
          <TitleBar>
            <Title>FreeCAD 0.21.0</Title>
            <WindowButtons>
              <FrameButton aria-label="Minimize">
                <svg width="18" height="18" viewBox="0 0 18 18"><path d="M5 12H13" stroke="#fff" strokeWidth="2" /></svg>
              </FrameButton>
              <FrameButton $round aria-label="Close">
                <svg width="18" height="18" viewBox="0 0 18 18"><path d="M6 6 12 12M12 6 6 12" stroke="#fff" strokeWidth="2.200" /></svg>
              </FrameButton>
            </WindowButtons>
          </TitleBar>
          <MenuBar>
            {MENUS.map(([a, b, c]) => (
              <MenuItem key={a + b + c}>{a}{b && <u>{b}</u>}{c}</MenuItem>
            ))}
          </MenuBar>
          <ToolRow>
            <ToolGroup><Grip /><Tools list={FILE_TOOLS} /></ToolGroup>
            <ToolGroup>
              <Grip />
              <Combo>
                <Icon name="workbench" />
                <ComboSelect disabled aria-label="Workbench"><option>Part Design</option></ComboSelect>
                <Chevron />
              </Combo>
            </ToolGroup>
            <ToolGroup><Grip /><Tools list={LINK_TOOLS} /></ToolGroup>
            <ToolGroup $grow>
              <Grip /><Tools list={VIEW_TOOLS} />
              <MoreButton aria-label="More"><More /></MoreButton>
            </ToolGroup>
            <ToolGroup>
              <Grip /><Tools list="measure" />
              <MoreButton aria-label="More"><More /></MoreButton>
            </ToolGroup>
          </ToolRow>
          <ToolRow>
            <ToolGroup><Grip /><Tools list={HELPER_TOOLS} /></ToolGroup>
            <ToolGroup $grow>
              <Grip /><Tools list={MODEL_TOOLS} />
              <MoreButton aria-label="More"><More /></MoreButton>
            </ToolGroup>
          </ToolRow>

          <Main>
            <Dock>
              <DockTitle>
                <h2>Birleşik görünüm</h2>
                <DockButton aria-label="Float">
                  <svg width="14" height="14" viewBox="0 0 14 14">
                    <path d="M2 6V2H6M2 2 6 6M8 2H12V6M12 2 8 6M2 8V12H6M2 12 6 8M12 8V12H8M12 12 8 8" fill="none" stroke="#999" strokeWidth="1.300" />
                  </svg>
                </DockButton>
                <DockButton aria-label="Close panel"><Cross /></DockButton>
              </DockTitle>
              <TabRow role="tablist">
                <DockTab $active role="tab">Model</DockTab>
                <DockTab role="tab">Görevler</DockTab>
              </TabRow>
              <HSplit $thin />
              <Box>
                <BoxContent>
                  <TreeHeader><span>Etiketler &amp; öznitelikleri</span><span>Açıklama</span></TreeHeader>
                  <TreeBody role="tree">
                    {TREE.map((n, i) => (
                      <TreeRow key={n.label} role="treeitem" $selected={n.selected} $root={i === 0}>
                        {n.guides.map((g, j) => <GuideCell key={j} kind={g} light={n.selected} />)}
                        <Icon name={n.icon} />
                        {n.label}
                      </TreeRow>
                    ))}
                  </TreeBody>
                </BoxContent>
                <ScrollBar>
                  <Chevron dir="up" />
                  <Thumb $share={79} $gap={26} />
                  <Chevron />
                </ScrollBar>
              </Box>
              <HSplit><Dashes /></HSplit>
              <Box $grow>
                <BoxContent $clip>
                  <PropTable>
                    <colgroup><col /><col /></colgroup>
                    <thead><tr><th>Özellik</th><th>Değer</th></tr></thead>
                    <tbody>
                      {PROPS.map((g) => (
                        <React.Fragment key={g.group}>
                          <GroupRow><th colSpan={2}>{g.group}</th></GroupRow>
                          {g.rows.map((r) => (
                            <PropRow key={r.name} $alt={r.alt} $selected={r.selected}>
                              <th><PropName><GuideCell kind={r.kind} /><span>{r.name}</span></PropName></th>
                              <td>{r.value}</td>
                            </PropRow>
                          ))}
                        </React.Fragment>
                      ))}
                    </tbody>
                  </PropTable>
                </BoxContent>
                <ScrollBar>
                  <Chevron dir="up" />
                  <Thumb $share={56} $gap={5} />
                  <Chevron />
                </ScrollBar>
              </Box>
              <HSplit $thin />
              <TabRow $bottom role="tablist">
                <DockTab $bottom $wide role="tab">Görünüm</DockTab>
                <DockTab $bottom $active role="tab">Veri</DockTab>
              </TabRow>
            </Dock>
            <VSplit><Dashes $vertical /></VSplit>
            <Workspace>
              <View>
                <Model />
                <NavCube />
                <AxisCross />
              </View>
              <DocTabs>
                <DocTab>
                  <svg width="17" height="18" viewBox="0 0 17 18" aria-hidden="true">
                    <path d="M1 1H10V5H5V7H9V11H5V17H1Z" fill="#cc1414" stroke="#7a0808" strokeWidth="0.700" />
                    <path d="M11 5V16M5.500 10.500H16.500M7 6.500 15 14.500M15 6.500 7 14.500" stroke="#3f67a6" strokeWidth="2" />
                    <circle cx="11" cy="10.500" r="3.500" fill="#5d86c4" stroke="#2c4f88" />
                    <circle cx="11" cy="10.500" r="1.400" fill="#fff" />
                  </svg>
                  {"Curves_WB_PipeshellProfile  : 1*"}
                  <DockButton aria-label="Close document"><Cross color="#909090" /></DockButton>
                </DocTab>
              </DocTabs>
            </Workspace>
          </Main>

          <StatusBar>
            <span>Valid, Dahili adı: Profile003</span>
            <NavStyle>
              <svg width="10" height="16" viewBox="0 0 10 16" aria-hidden="true">
                <rect x="1" y="2" width="8" height="12" rx="4" fill="#fff" stroke="#333" strokeWidth="1.600" />
                <path d="M5 4V8" stroke="#333" strokeWidth="2" />
              </svg>
              Blender
            </NavStyle>
            <span>209,16 mm x 170,15 mm</span>
          </StatusBar>
        </Window>
      </Desktop>
    </>
  );
}
